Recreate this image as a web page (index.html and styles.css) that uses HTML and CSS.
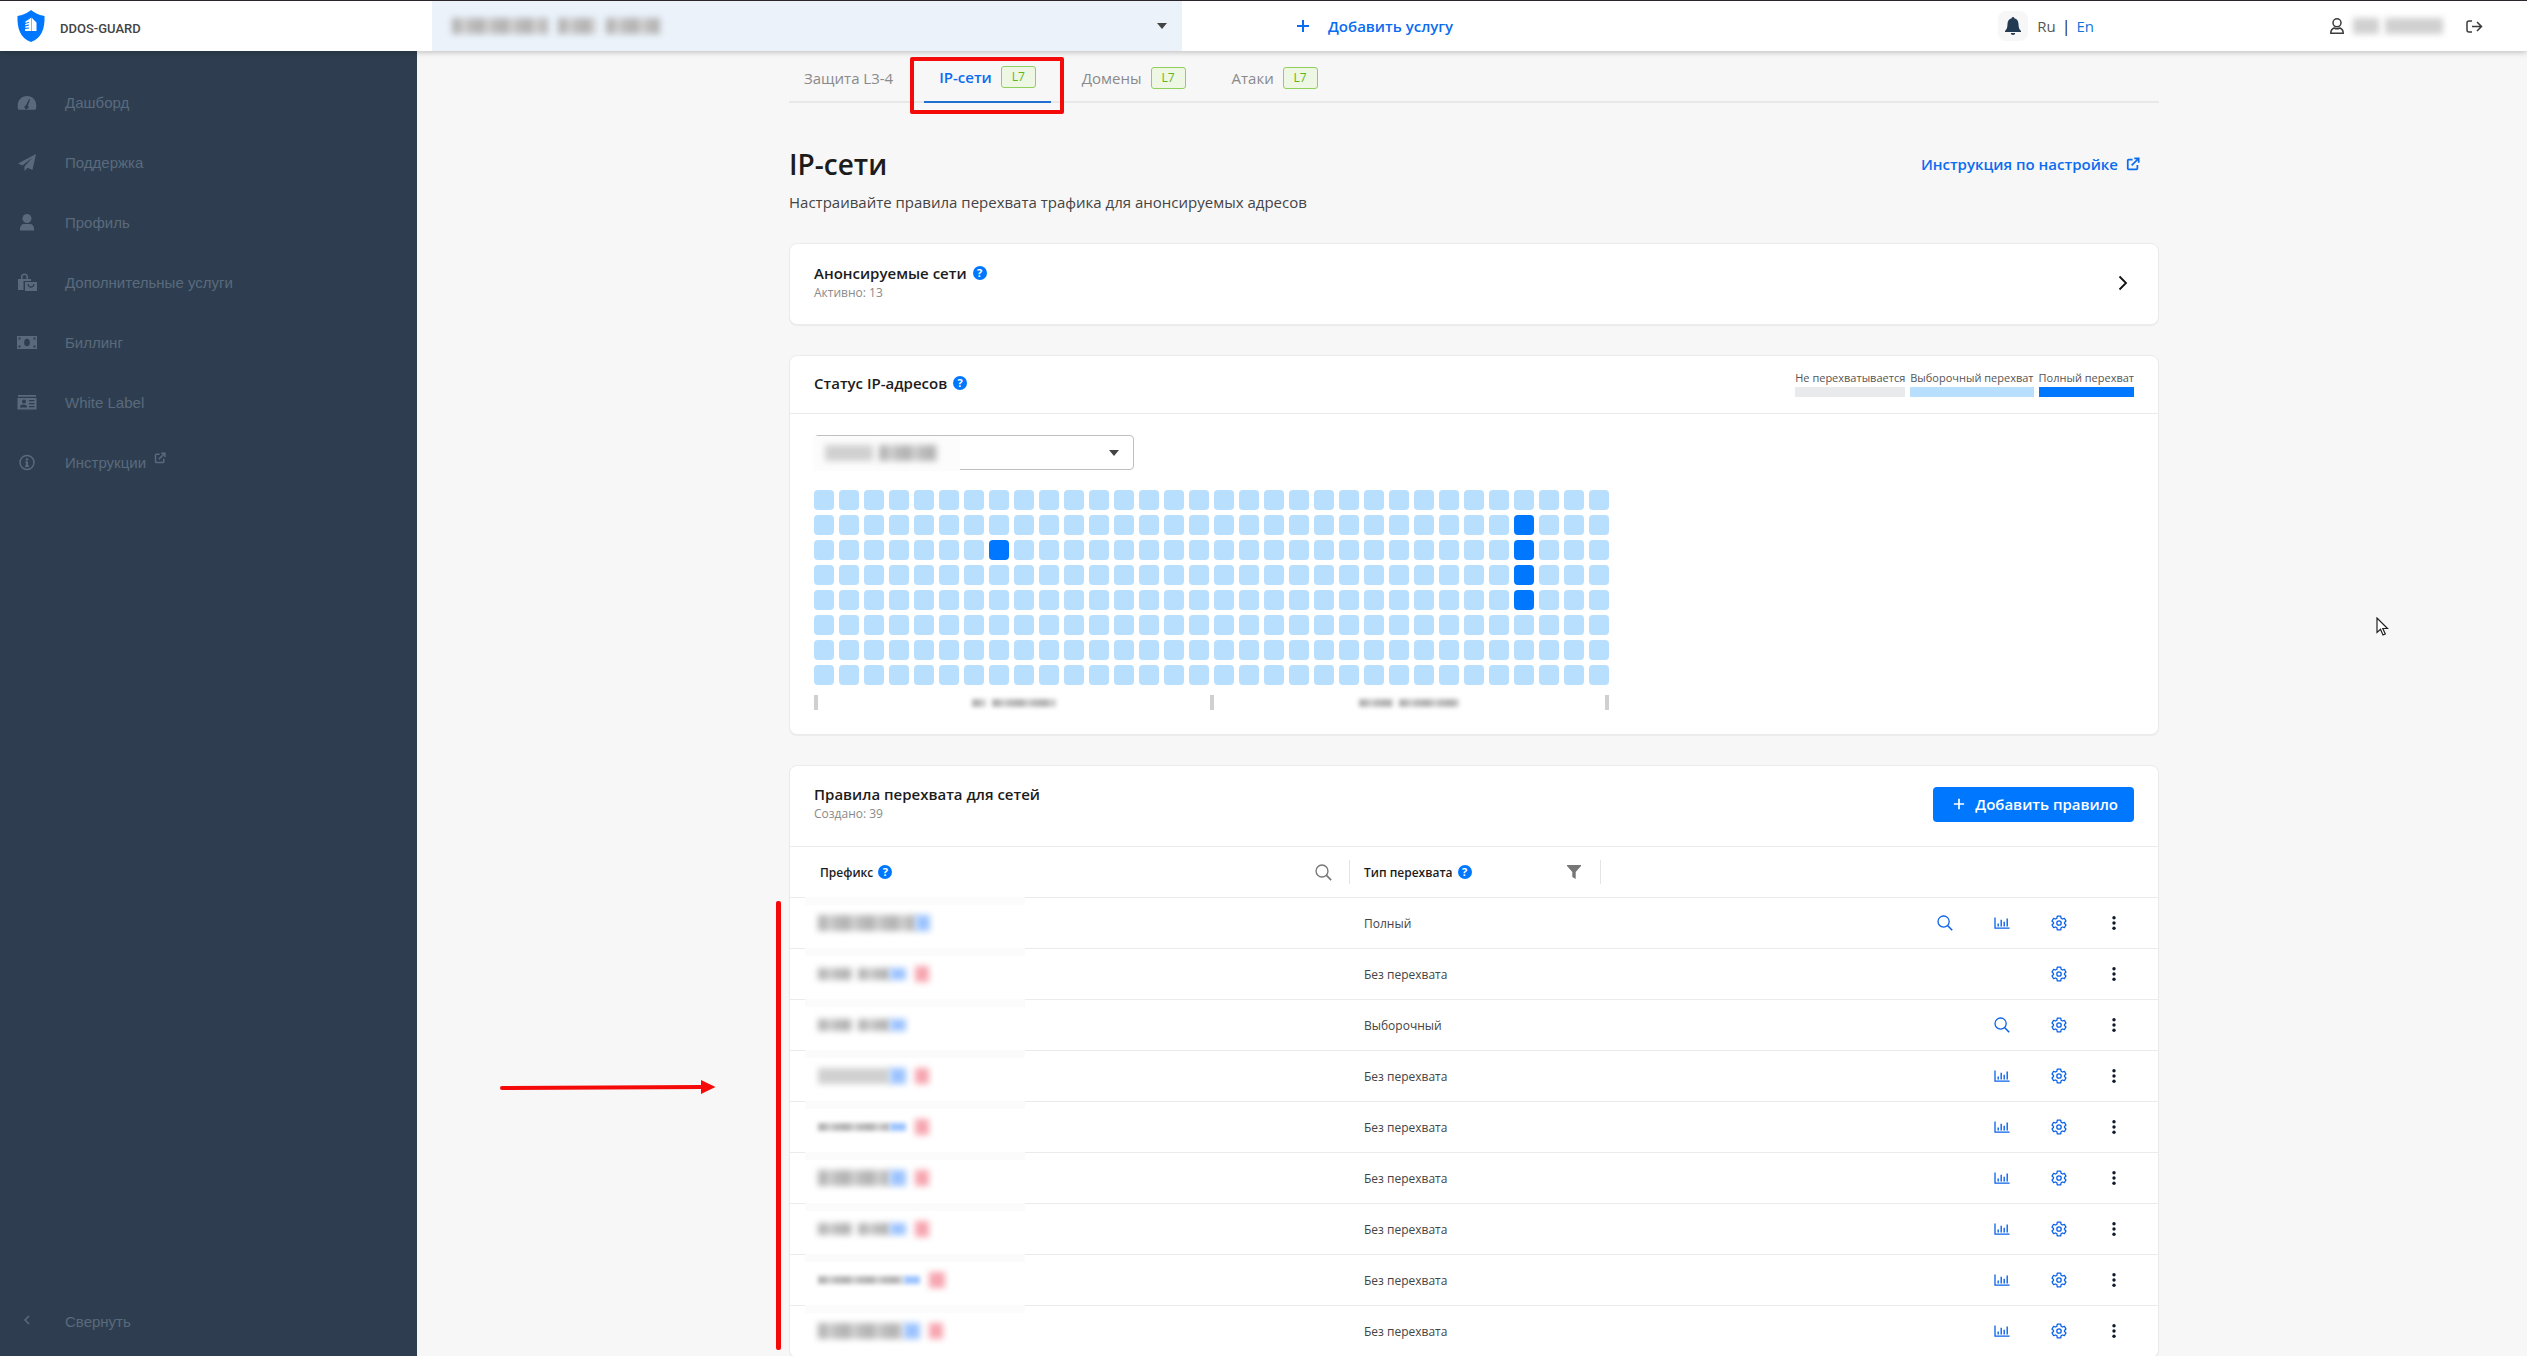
FILE: index.html
```
<!DOCTYPE html>
<html lang="ru">

<head>
    <meta charset="UTF-8">
    <meta name="viewport" content="width=device-width, initial-scale=1.0">
    <title>DDOS-GUARD</title>
    <link rel="stylesheet" href="styles.css">
</head>

<body>
    <!-- Icons -->
    <svg class="sprite" aria-hidden="true">
        <symbol id="i-search" viewBox="0 0 16 16">
            <circle cx="6.6" cy="6.6" r="5.6" fill="none" stroke="currentColor" stroke-width="1.3" />
            <path d="M10.8 10.8 15.2 15.2" stroke="currentColor" stroke-width="1.6" />
        </symbol>
        <symbol id="i-chart" viewBox="0 0 16 16">
            <path d="M1 2.5V13.2H15.6" fill="none" stroke="currentColor" stroke-width="1.3" />
            <path d="M4.2 8.5V11.4M7.2 4.8V11.4M10.2 6.8V11.4M13.2 3.6V11.4" stroke="currentColor" stroke-width="1.4" />
        </symbol>
        <symbol id="i-gear" viewBox="0 0 16 16">
            <path d="M6.3 1.2h3.4l.4 2 1.3.8 2-.7 1.6 2.8-1.5 1.3v1.2l1.5 1.3-1.6 2.8-2-.7-1.3.8-.4 2H6.300l-.4-2-1.300-.8-2 .7L1 9.900l1.500-1.300V7.400L1 6.100l1.600-2.800 2 .7 1.300-.8z" fill="none" stroke="currentColor" stroke-width="1.3" stroke-linejoin="round" />
            <circle cx="8" cy="8" r="2.200" fill="none" stroke="currentColor" stroke-width="1.3" />
        </symbol>
        <symbol id="i-dots" viewBox="0 0 16 16">
            <circle cx="8" cy="2.700" r="1.700" />
            <circle cx="8" cy="8" r="1.700" />
            <circle cx="8" cy="13.300" r="1.700" />
        </symbol>
        <symbol id="i-external" viewBox="0 0 16 16">
            <path d="M7.500 3H3a1 1 0 0 0-1 1v9a1 1 0 0 0 1 1h9a1 1 0 0 0 1-1V9M6.500 9.500 14 2M9.500 1.500H14.500V6.500" fill="none" stroke="currentColor" stroke-width="2" />
        </symbol>
        <symbol id="i-plus" viewBox="0 0 14 14">
            <path d="M7 1V13M1 7H13" stroke="currentColor" stroke-width="2" />
        </symbol>
    </svg>

    <header class="topbar">
        <a class="logo" href="#">
            <svg width="28" height="32" viewBox="0 0 28 32" aria-hidden="true">
                <path fill="#0077ff" d="M14 0c3 2.600 7 4.800 13.500 6C28 18 25 28 14 32 3 28 0 18 .5 6 7 4.800 11 2.600 14 0z" />
                <path fill="#fff" d="M8.500 11.500 14.500 7.500V21H8v-2l4-.6v-1l-3.800.4v-1.400l3.800-.8v-1l-3.800.6V14l3.800-1.200v-1l-3.500 1.200zM15 8l4.500 4.500V21H15z" />
            </svg>
            <span>DDOS-GUARD</span>
        </a>
        <div class="service">
            <select class="service-select" aria-label="Услуга">
                <option></option>
            </select>
            <span class="smudges service-name">
                <i class="smudge" style="width: 96px"></i>
                <i class="smudge" style="width: 38px"></i>
                <i class="smudge" style="width: 54px"></i>
            </span>
        </div>
        <a class="add-service" href="#">
            <svg width="14" height="14"><use href="#i-plus" /></svg>
            Добавить услугу
        </a>
        <div class="top-tools">
            <button class="bell" aria-label="Уведомления">
                <svg width="18" height="18" viewBox="0 0 18 18">
                    <path d="M9 0c.8 0 1.300.6 1.300 1.300C13 2 14.500 4 14.500 7c0 4 1 5.500 2.500 7v1H1v-1c1.500-1.500 2.500-3 2.500-7 0-3 1.500-5 4.200-5.700C7.700.6 8.200 0 9 0zM6.800 16h4.400c0 1.200-1 2-2.200 2s-2.200-.8-2.200-2z" />
                </svg>
            </button>
            <a class="lang" href="#">Ru</a>
            <span class="lang-divider">|</span>
            <a class="lang active" href="#">En</a>
        </div>
        <div class="account">
            <svg class="line" width="14" height="16" viewBox="0 0 14 16" aria-hidden="true">
                <circle cx="7" cy="4.800" r="4" />
                <path d="M4 10C2 10.800.8 12 .8 15.200h12.400C13.200 12 12 10.800 10 10Q7 11.500 4 10z" />
            </svg>
            <span class="smudges">
                <i class="smudge pale" style="width: 26px"></i>
                <i class="smudge pale" style="width: 58px"></i>
            </span>
            <button class="logout" aria-label="Выйти">
                <svg class="line" width="17" height="13" viewBox="0 0 17 13">
                    <path d="M6 1H3a2 2 0 0 0-2 2v7a2 2 0 0 0 2 2h3M6 6.500h10M11 2l4.500 4.500L11 11" />
                </svg>
            </button>
        </div>
    </header>

    <div class="layout">
        <nav class="sidebar">
            <a href="#">
                <svg viewBox="0 0 20 20"><path fill-rule="evenodd" d="M1 17C-.5 9 4 4 10 4s10.500 5 9 13c-.2.600-.5.800-1 .8H2c-.5 0-.8-.2-1-.8zM12 7l-3 6.200A2 2 0 1 0 11 13.800L13 7.400z" /></svg>
                Дашборд
            </a>
            <a href="#">
                <svg viewBox="0 0 20 20"><path d="M19 2 1 11.500l4.500 2L15.500 5.500 7.500 14.500V19l3-3.200 5 2.200z" /></svg>
                Поддержка
            </a>
            <a href="#">
                <svg viewBox="0 0 20 20"><circle cx="10" cy="6.500" r="4.500" /><path d="M3 18.500c-.3-5 2-6.500 4-6.500h6c2 0 4.300 1.500 4 6.500z" /></svg>
                Профиль
            </a>
            <a href="#">
                <svg viewBox="0 0 20 20"><path d="M1 7h3V5a3.500 3.500 0 0 1 7 0v2h3v2H6.500v9H1zM5.500 7h4V5a2 2 0 0 0-4 0z" fill-rule="evenodd" /><path fill-rule="evenodd" d="M8 10h12v9H8zm2.500 2c.3 5 6.700 5 7 0h-1.200c-.3 3.200-4.300 3.200-4.600 0z" /></svg>
                Дополнительные услуги
            </a>
            <a href="#">
                <svg viewBox="0 0 20 20"><path fill-rule="evenodd" d="M0 4h20v13H0zm10 2.700a2.700 3.600 0 0 0 0 7.600 2.700 3.600 0 0 0 0-7.600zM1.500 5.500v2h2v-2zm15 0v2h2v-2zm-15 8v2h2v-2zm15 0v2h2v-2z" /></svg>
                Биллинг
            </a>
            <a href="#">
                <svg viewBox="0 0 20 20"><path fill-rule="evenodd" d="M1 3h18v1.800H1zM.5 6h19v11.500H.5zM7 7.500a2 2 0 1 0 0 4 2 2 0 0 0 0-4zM3 15.500h7c0-2-1-3-3.500-3S3 13.500 3 15.500zM12 8v1.200h5.500V8zm0 3v1.200h5.500V11zm0 3v1.200h5.500V14z" /></svg>
                White Label
            </a>
            <a href="#">
                <svg viewBox="0 0 20 20"><circle cx="10" cy="10.500" r="7" fill="none" stroke="currentColor" stroke-width="1.500" /><circle cx="10" cy="7.500" r="1.300" /><path d="M8.300 9.500h2.700v4h1V15H8v-1.500h1V11h-.7z" /></svg>
                <span>Инструкции</span>
                <svg class="ext" width="12" height="12"><use href="#i-external" /></svg>
            </a>
            <button class="collapse">
                <svg viewBox="0 0 20 20"><path d="M12 5 8 9l4 4" fill="none" stroke="currentColor" stroke-width="1.500" /></svg>
                Свернуть
            </button>
        </nav>

        <main class="main">
            <div class="content">
                <nav class="tabs">
                    <a class="tab" href="#">Защита L3-4</a>
                    <a class="tab active" href="#">IP-сети <span class="badge">L7</span><i class="frame"></i></a>
                    <a class="tab" href="#">Домены <span class="badge">L7</span></a>
                    <a class="tab" href="#">Атаки <span class="badge">L7</span></a>
                </nav>

                <div class="page-head">
                    <div>
                        <h1>IP-сети</h1>
                        <p>Настраивайте правила перехвата трафика для анонсируемых адресов</p>
                    </div>
                    <a class="manual" href="#">
                        Инструкция по настройке
                        <svg width="14" height="14"><use href="#i-external" /></svg>
                    </a>
                </div>

                <section class="card networks">
                    <div>
                        <h2>Анонсируемые сети <button class="help" aria-label="Подсказка">?</button></h2>
                        <p class="note">Активно: 13</p>
                    </div>
                    <button class="open" aria-label="Открыть">
                        <svg width="10" height="16" viewBox="0 0 10 16"><path d="M1.500 1.500 8 8l-6.500 6.500" fill="none" stroke="#111" stroke-width="1.800" /></svg>
                    </button>
                </section>

                <section class="card">
                    <div class="card-head status-head">
                        <h2>Статус IP-адресов <button class="help" aria-label="Подсказка">?</button></h2>
                        <div class="legend">
                            <span class="none">Не перехватывается</span>
                            <span class="partial">Выборочный перехват</span>
                            <span class="full">Полный перехват</span>
                        </div>
                    </div>
                    <div class="status-body">
                        <div class="network">
                            <select class="network-select" aria-label="Сеть">
                                <option></option>
                            </select>
                            <span class="smudges network-name">
                                <i class="smudge pale" style="width: 48px"></i>
                                <i class="smudge" style="width: 58px"></i>
                            </span>
                        </div>
                        <div class="ip-map">
                            <div class="cells" id="cells"></div>
                            <div class="ruler">
                                <i class="tick"></i>
                                <span class="smudges">
                                    <i class="smudge thin" style="width: 14px"></i>
                                    <i class="smudge thin" style="width: 64px"></i>
                                </span>
                                <i class="tick"></i>
                                <span class="smudges">
                                    <i class="smudge thin" style="width: 34px"></i>
                                    <i class="smudge thin" style="width: 60px"></i>
                                </span>
                                <i class="tick"></i>
                            </div>
                        </div>
                    </div>
                </section>

                <section class="card rules">
                    <div class="card-head rules-head">
                        <div>
                            <h2>Правила перехвата для сетей</h2>
                            <p class="note">Создано: 39</p>
                        </div>
                        <button class="add-rule">
                            <svg width="12" height="12"><use href="#i-plus" /></svg>
                            Добавить правило
                        </button>
                    </div>
                    <table>
                        <thead>
                            <tr>
                                <th class="col-prefix">
                                    <div class="th">
                                        Префикс <button class="help" aria-label="Подсказка">?</button>
                                        <button class="th-tool" aria-label="Поиск"><svg width="17" height="17"><use href="#i-search" /></svg></button>
                                    </div>
                                </th>
                                <th class="col-type">
                                    <div class="th">
                                        Тип перехвата <button class="help" aria-label="Подсказка">?</button>
                                        <button class="th-tool" aria-label="Фильтр"><svg width="14" height="14" viewBox="0 0 14 14"><path d="M0 0h14v1L8.700 7v7L5.300 12V7L0 1z" /></svg></button>
                                    </div>
                                </th>
                                <th></th>
                            </tr>
                        </thead>
                        <tbody id="rules"></tbody>
                    </table>
                    <i class="marker"></i>
                </section>
            </div>
            <svg class="arrow" width="216" height="16" viewBox="0 0 216 16">
                <path d="M2 9 202 8" stroke="#f50a0a" stroke-width="4" stroke-linecap="round" />
                <path d="M201 1 215.500 8 201 15z" fill="#f50a0a" />
            </svg>
        </main>
    </div>

    <svg class="cursor" width="13" height="20" viewBox="0 0 13 20">
        <path d="M1 1V15.500L4.500 12.300 7 18 9.300 17 6.800 11.500H11.500z" fill="#fff" stroke="#222" stroke-width="1.200" />
    </svg>

    <script>
        const COLS = 32;
        const ROWS = 8;
        // "row:col" of the fully intercepted addresses
        const full = ["1:28", "2:7", "2:28", "3:28", "4:28"];

        const cells = document.getElementById("cells");
        for (let r = 0; r < ROWS; r++) {
            for (let c = 0; c < COLS; c++) {
                const cell = document.createElement("i");
                cell.className = full.includes(`${r}:${c}`) ? "cell full" : "cell";
                cells.appendChild(cell);
            }
        }

        const labels = { search: "Поиск", chart: "График", gear: "Настройки", dots: "Ещё" };

        // smudge: [tone, width] of each hidden part of the prefix
        const rules = [
            { type: "Полный", smudge: [["", 98], ["blue", 14]], icons: ["search", "chart", "gear", "dots"] },
            { type: "Без перехвата", smudge: [["low", 34], ["gap", 6], ["low", 32], ["blue low", 16], ["red", 14]], icons: ["gear", "dots"] },
            { type: "Выборочный", smudge: [["low", 34], ["gap", 6], ["low", 32], ["blue low", 16]], icons: ["search", "gear", "dots"] },
            { type: "Без перехвата", smudge: [["pale", 72], ["blue", 16], ["red", 14]], icons: ["chart", "gear", "dots"] },
            { type: "Без перехвата", smudge: [["thin", 72], ["blue thin", 16], ["red", 14]], icons: ["chart", "gear", "dots"] },
            { type: "Без перехвата", smudge: [["", 72], ["blue", 16], ["red", 14]], icons: ["chart", "gear", "dots"] },
            { type: "Без перехвата", smudge: [["low", 34], ["gap", 6], ["low", 32], ["blue low", 16], ["red", 14]], icons: ["chart", "gear", "dots"] },
            { type: "Без перехвата", smudge: [["thin", 86], ["blue thin", 16], ["red", 16]], icons: ["chart", "gear", "dots"] },
            { type: "Без перехвата", smudge: [["", 86], ["blue", 16], ["red", 14]], icons: ["chart", "gear", "dots"] }
        ];

        document.getElementById("rules").innerHTML = rules.map(rule => `
            <tr>
                <td class="col-prefix"><span class="prefix">${rule.smudge.map(([tone, w]) =>
                    `<i class="smudge ${tone}" style="width: ${w}px"></i>`).join("")}</span></td>
                <td class="col-type">${rule.type}</td>
                <td><div class="actions">${rule.icons.map(icon =>
                    `<button class="${icon}" aria-label="${labels[icon]}"><svg width="16" height="16"><use href="#i-${icon}" /></svg></button>`).join("")}</div></td>
            </tr>`).join("");
    </script>
</body>

</html>
```
FILE: styles.css
```
* {
    box-sizing: border-box;
}

body {
    margin: 0;
    height: 100vh;
    display: flex;
    flex-direction: column;
    overflow: hidden;
    font-family: "Open Sans", "Noto Sans", sans-serif;
    font-size: 16px;
    color: #1c1c1c;
    background: #f7f7f7;
}

a {
    color: inherit;
    text-decoration: none;
}

button {
    font: inherit;
    color: inherit;
    border: none;
    background: none;
    padding: 0;
    cursor: pointer;
}

svg {
    fill: currentColor;
    flex: none;
}

svg.line {
    fill: none;
    stroke: #3c3c3c;
    stroke-width: 1.5px;
}

h1,
h2,
p {
    margin: 0;
}

.sprite {
    display: none;
}

/* Hidden values */
.smudges {
    display: flex;
    align-items: center;
    gap: 6px;
}

.smudge {
    height: 16px;
    filter: blur(3px);
    background: repeating-linear-gradient(90deg, #b4b4b4 0 7px, #d0d0d0 10px 14px, #bcbcbc 17px 22px, #b4b4b4 24px);
}

.smudge.pale {
    background: #d0d0d0;
}

.smudge.low {
    height: 12px;
}

.smudge.thin {
    height: 8px;
    filter: blur(2px);
}

.smudge.gap {
    background: none;
}

.smudge.blue {
    background: #9cc3ff;
}

.smudge.red {
    background: #f7a6b0;
    margin-left: 9px;
}

/* Top bar */
.topbar {
    position: relative;
    z-index: 2;
    flex: none;
    height: 51px;
    display: flex;
    align-items: center;
    background: #fff;
    border-top: 1px solid #2a262b;
    box-shadow: 0 1px 6px rgba(0, 0, 0, 0.25);
}

.logo {
    width: 432px;
    padding-left: 17px;
    display: flex;
    align-items: center;
    gap: 15px;
    font-family: Roboto, sans-serif;
    font-size: 13px;
    font-weight: 500;
    color: #444;
}

.logo span {
    padding-top: 4px;
}

.service {
    position: relative;
    width: 750px;
    height: 100%;
}

.service-select {
    width: 100%;
    height: 100%;
    border: none;
    appearance: none;
    background: #ebf2fa;
}

.service::after,
.network::after {
    content: "";
    position: absolute;
    right: 15px;
    top: 22px;
    border: 5px solid transparent;
    border-top: 6px solid #444;
    border-bottom: none;
}

.service-name {
    position: absolute;
    left: 20px;
    top: 17px;
    gap: 10px;
}

.add-service {
    margin-left: 114px;
    display: flex;
    align-items: center;
    gap: 18px;
    font-size: 15px;
    font-weight: 600;
    color: #0a6cf0;
}

.top-tools {
    margin-left: auto;
    margin-right: 236px;
    display: flex;
    align-items: center;
    gap: 6px;
}

.bell {
    width: 30px;
    height: 30px;
    margin-right: 3px;
    display: grid;
    place-items: center;
    border-radius: 8px;
    background: #f7f7f7;
    color: #223a52;
}

.lang {
    font-size: 15px;
    color: #555;
}

.lang.active {
    color: #1273de;
}

.account {
    margin-right: 44px;
    display: flex;
    align-items: center;
    gap: 9px;
}

.logout {
    margin-left: 14px;
    display: grid;
}

/* Sidebar */
.layout {
    flex: 1;
    min-height: 0;
    display: flex;
}

.sidebar {
    width: 417px;
    flex: none;
    display: flex;
    flex-direction: column;
    padding: 21px 0 5px;
    background: #2e3e50;
    font-family: "Liberation Sans", Arial, sans-serif;
    font-size: 15px;
    color: #5a6a7c;
}

.sidebar a,
.collapse {
    height: 60px;
    padding-left: 17px;
    display: flex;
    align-items: center;
    gap: 28px;
}

.sidebar svg {
    width: 20px;
    height: 20px;
}

.sidebar .ext {
    width: 12px;
    height: 12px;
    margin: -8px 0 0 -20px;
}

.collapse {
    margin-top: auto;
}

/* Content */
.main {
    position: relative;
    flex: 1;
    min-width: 0;
    overflow: hidden;
    padding: 0 58px 0 62px;
}

.content {
    max-width: 1370px;
    margin: 0 auto;
}

.tabs {
    height: 52px;
    display: flex;
    gap: 16px;
    border-bottom: 2px solid #e8e8e8;
}

.tab {
    position: relative;
    height: 52px;
    padding: 2px 15px 0;
    display: flex;
    align-items: center;
    gap: 9px;
    font-size: 15px;
    color: #8a8a8a;
}

.tab.active {
    font-weight: 600;
    color: #0a6cf0;
    border-bottom: 2px solid #1f6fd0;
}

.badge {
    width: 35px;
    height: 22px;
    line-height: 20px;
    text-align: center;
    font-size: 12px;
    font-weight: 400;
    color: #5fb51e;
    background: #eef7e4;
    border: 1px solid #8fcf5c;
    border-radius: 3px;
}

.frame {
    position: absolute;
    inset: 6px -13px -13px -14px;
    border: 4px solid #f50a0a;
    border-radius: 2px;
}

.page-head {
    display: flex;
    justify-content: space-between;
    align-items: flex-start;
    padding-top: 41px;
    height: 140px;
}

h1 {
    font-size: 28px;
    line-height: 40px;
    font-weight: 600;
}

.page-head p {
    margin-top: 6px;
    font-size: 15px;
    line-height: 24px;
    color: #444;
}

.manual {
    margin: 8px 19px 0 0;
    display: flex;
    align-items: center;
    gap: 8px;
    font-size: 15px;
    line-height: 24px;
    font-weight: 600;
    color: #0a6cf0;
}

.card {
    position: relative;
    margin-bottom: 30px;
    background: #fff;
    border: 1px solid #ebebeb;
    border-radius: 8px;
    box-shadow: 0 1px 1px rgba(0, 0, 0, 0.05);
}

h2 {
    display: flex;
    align-items: center;
    gap: 6px;
    font-size: 15px;
    line-height: 20px;
    font-weight: 600;
}

.note {
    font-size: 12px;
    line-height: 20px;
    color: #8a8a8a;
}

.help {
    width: 14px;
    height: 14px;
    border-radius: 50%;
    background: #0077ff;
    color: #fff;
    font-size: 11px;
    line-height: 14px;
    font-weight: 700;
}

.networks {
    display: flex;
    justify-content: space-between;
    align-items: center;
    height: 82px;
    padding: 0 30px 2px 24px;
}

.open {
    display: grid;
}

.card-head {
    display: flex;
    justify-content: space-between;
    align-items: center;
    padding: 0 24px 4px;
    border-bottom: 1px solid #ebebeb;
}

.status-head {
    height: 58px;
}

.legend {
    display: flex;
    gap: 5px;
    font-size: 11px;
    line-height: 18px;
    color: #555;
}

.legend span {
    border-bottom: 10px solid #e9eaec;
}

.legend .partial {
    border-color: #b9dfff;
}

.legend .full {
    border-color: #0077ff;
}

.status-body {
    padding: 21px 24px 24px;
}

.network {
    position: relative;
    width: 320px;
    height: 35px;
    margin-bottom: 20px;
}

.network::after {
    top: 15px;
}

.network-select {
    width: 100%;
    height: 100%;
    appearance: none;
    background: #fff;
    border: 1px solid #bfbfbf;
    border-radius: 4px;
}

.network-name {
    position: absolute;
    left: -1px;
    top: 1px;
    width: 147px;
    height: 35px;
    padding: 0 12px 2px;
    background: #fcfcfc;
}

.ip-map {
    width: max-content;
}

.cells {
    display: grid;
    grid-template-columns: repeat(32, 20px);
    grid-auto-rows: 20px;
    gap: 5px;
}

.cell {
    border-radius: 4px;
    background: #b9dfff;
}

.cell.full {
    background: #0077ff;
}

.ruler {
    display: flex;
    align-items: center;
    margin-top: 10px;
}

.ruler .smudges {
    flex: 1;
    justify-content: center;
}

.tick {
    width: 4px;
    height: 15px;
    background: #d0d0d0;
}

/* Rules table */
.rules-head {
    height: 81px;
}

.add-rule {
    height: 35px;
    padding: 0 16px 0 20px;
    display: flex;
    align-items: center;
    gap: 10px;
    border-radius: 4px;
    background: #0077ff;
    color: #fff;
    font-size: 15px;
    font-weight: 600;
}

table {
    width: 100%;
    table-layout: fixed;
    border-collapse: separate;
    border-spacing: 0;
    font-size: 12px;
    color: #444;
}

th,
td {
    position: relative;
    height: 51px;
    padding: 0;
    text-align: left;
    border-bottom: 1px solid #ebebeb;
}

th {
    font-weight: 600;
    color: #1c1c1c;
}

.th {
    height: 24px;
    display: flex;
    align-items: center;
    gap: 5px;
    border-right: 1px solid #e4e4e4;
}

.th-tool {
    width: 18px;
    display: grid;
    place-items: center;
    margin: 0 17px 0 auto;
    color: #777;
}

.col-prefix {
    width: 560px;
}

th.col-prefix {
    padding-left: 30px;
}

.col-type {
    width: 251px;
    padding-left: 14px;
}

.prefix {
    position: absolute;
    left: 15px;
    top: -1px;
    width: 220px;
    height: 51px;
    padding-left: 13px;
    display: flex;
    align-items: center;
    background: linear-gradient(#fbfbfb 8px, #fff 8px);
}

.actions {
    display: flex;
    justify-content: flex-end;
    padding-right: 18px;
}

.actions button {
    width: 57px;
    height: 30px;
    display: grid;
    place-items: center;
    color: #0a62e8;
}

.actions .dots {
    width: 53px;
    color: #111a2c;
}

/* Annotations */
.marker {
    position: absolute;
    left: -14px;
    top: 135px;
    bottom: 7px;
    width: 5px;
    border-radius: 2px;
    background: #f50a0a;
}

.arrow {
    position: absolute;
    left: 83px;
    top: 1028px;
}

.cursor {
    position: fixed;
    right: 138px;
    top: 617px;
}
```
